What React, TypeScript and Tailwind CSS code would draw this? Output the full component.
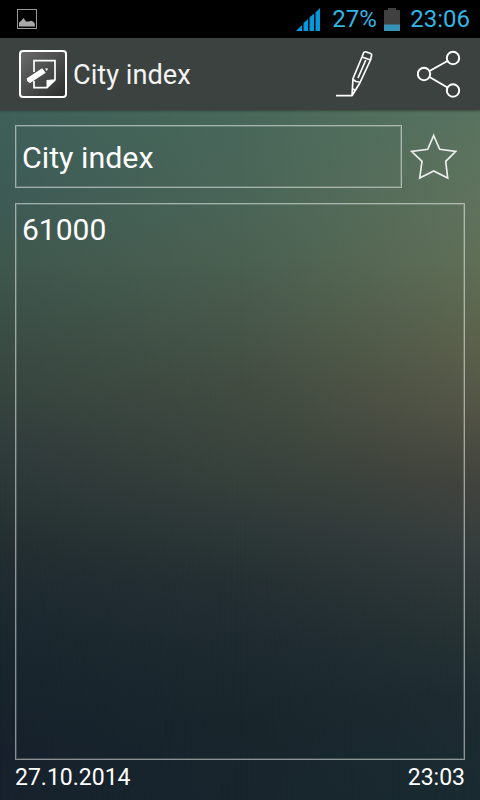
"use client";
import { useState } from "react";

type Note = {
  title: string;
  text: string;
  date: string;
  time: string;
};

const note: Note = {
  title: "City index",
  text: "61000",
  date: "27.10.2014",
  time: "23:03",
};

const StatusBar = () => (
  <div className="flex h-[38px] shrink-0 items-center bg-black text-2xl text-[#33b5e5]">
    <svg className="ml-[17px]" width="20" height="20" viewBox="0 0 20 20">
      <rect x="0.5" y="0.5" width="19" height="19" fill="none" stroke="#999" />
      <path
        d="M2 17.500v-4l2.500-2L6.500 9l2.500 3.500h3l2-.8 2 .8 1.800 2v3z"
        fill="#a9a9a9"
      />
    </svg>
    <svg className="ml-auto" width="25" height="23" viewBox="0 0 25 23">
      <g fill="#0099dd">
        <path d="M0 23L6 17v6z" />
        <path d="M7.500 23v-8l4.500-4V23z" />
        <path d="M13.500 23V9.500l4.500-4V23z" />
        <path d="M19.500 23V4.500l4.500-4.500v23z" />
      </g>
    </svg>
    <span className="ml-[11px] w-[45px] whitespace-nowrap">27%</span>
    <svg className="ml-[7px]" width="16" height="23" viewBox="0 0 16 23">
      <path d="M0 2h4V0h8v2h4v21H0z" fill="#404040" />
      <path d="M0 16.500h16V23H0z" fill="#3592b8" />
    </svg>
    <span className="ml-[10px] mr-[10px]">23:06</span>
  </div>
);

const AppIcon = () => (
  <svg width="48" height="48" viewBox="0 0 48 48">
    <defs>
      <linearGradient id="iconBg" x1="0" y1="0" x2="1" y2="1">
        <stop offset="0" stopColor="#6b6e6d" />
        <stop offset="1" stopColor="#292b2a" />
      </linearGradient>
    </defs>
    <rect
      x="1"
      y="1"
      width="46"
      height="46"
      rx="3"
      fill="url(#iconBg)"
      stroke="#fff"
      strokeWidth="2"
    />
    <path
      d="M15 22V10.700h21V30l-8 7.700H15V31"
      fill="none"
      stroke="#fff"
      strokeWidth="1.7"
    />
    <path d="M27.500 38v-8l9-.7z" fill="#fff" />
    <path
      d="M8.300 28.800l14.700-9.800 2.800 3.500-14.800 9.800q-2.500-.5-2.700-3.500z"
      fill="#fff"
      stroke="#fff"
      strokeWidth="1.2"
    />
    <path d="M26 18.500h3.200l-1.500 2.500z" fill="#fff" />
  </svg>
);

const EditIcon = () => (
  <svg
    width="40"
    height="48"
    viewBox="0 0 40 48"
    fill="none"
    stroke="#fff"
    strokeWidth="1.7"
    strokeLinejoin="round"
  >
    <path d="M1 45.700h16l1-17.200L27 7l1.600-4.200q.6-1.300 2-1l5 1.700q1.400.6 1 2L35.500 10 24.800 33 17 45.700" />
    <path d="M27 7l8.500 3M30.800 10L23 28M18 29.500l3 2 3.500 .5M17.700 39l3 1.500" />
  </svg>
);

const ShareIcon = () => (
  <svg
    width="44"
    height="48"
    viewBox="0 0 44 48"
    fill="none"
    stroke="#fff"
    strokeWidth="2"
  >
    <circle cx="7" cy="24" r="6.200" />
    <circle cx="36" cy="8" r="6.200" />
    <circle cx="36" cy="40.500" r="6.200" />
    <path d="M12.500 21l18-10M12.500 27l18 10.500" />
  </svg>
);

const App = () => {
  const [title, setTitle] = useState(note.title);
  const [text, setText] = useState(note.text);
  const [favorite, setFavorite] = useState(false);

  return (
    <div className="relative isolate flex h-[800px] w-[480px] flex-col overflow-hidden font-[Roboto,sans-serif] text-white">
      {/* background: left, center and right color columns blended together */}
      <div className="absolute inset-0 -z-10 bg-[linear-gradient(#3f6059_110px,#3d5b56_190px,#3f584e_260px,#3b4f46_323px,#37463f_390px,#323e3d_435px,#2a3536_500px,#232e31_550px,#1e2a31_600px,#19262d_658px,#17212c_747px,#17222d_800px)]" />
      <div className="absolute inset-0 -z-10 bg-[linear-gradient(#48685a_110px,#4a6557_200px,#4a6051_260px,#47574a_320px,#424d42_380px,#3c473e_430px,#36413c_480px,#2d3838_530px,#253033_580px,#1e2a30_645px,#18262c_725px,#18252d_800px)] [mask-image:linear-gradient(to_right,transparent,black_50%)]" />
      <div className="absolute inset-0 -z-10 bg-[linear-gradient(#587360_110px,#5f735d_190px,#606f57_260px,#5b614b_345px,#535446_412px,#4b4c41_445px,#42443d_480px,#3a403e_525px,#313a3b_570px,#263233_636px,#1e2c32_700px,#192b31_800px)] [mask-image:linear-gradient(to_right,transparent_50%,black)]" />

      <StatusBar />

      <header className="flex h-[72px] shrink-0 items-center bg-[#3b423f] pl-[19px] pr-[19px] shadow-[0_1px_2px_rgba(0,0,0,0.35)]">
        <AppIcon />
        <h1 className="ml-[6px] pt-[2px] text-[27.2px] text-[#f3f3f3]">
          {title}
        </h1>
        <button className="ml-auto">
          <EditIcon />
        </button>
        <button className="ml-[42px]">
          <ShareIcon />
        </button>
      </header>

      <main className="flex flex-1 flex-col px-[15px] pt-[15px]">
        <div className="flex items-center">
          <input
            className="h-[63px] w-[387px] border border-white/50 px-[6px] pt-[2px] text-[30.400px] shadow-[inset_0_0_0_1px_rgba(255,255,255,0.18)] outline-none"
            value={title}
            onChange={(e) => setTitle(e.target.value)}
          />
          <button className="ml-2" onClick={() => setFavorite(!favorite)}>
            <svg width="48" height="47" viewBox="0 0 48 47">
              <path
                d="M23.700 2.500l6 13.800 16 2-10 10 2 16.700-14-7-14 7 2.300-16.700-10.500-10 16.200-2z"
                fill={favorite ? "#fff" : "none"}
                stroke="#ededed"
                strokeWidth="1.7"
              />
            </svg>
          </button>
        </div>
        <textarea
          className="mt-[15px] h-[557px] w-full resize-none border border-white/50 px-[6px] pt-[8px] text-[30px] leading-[36px] shadow-[inset_0_0_0_1px_rgba(255,255,255,0.18)] outline-none"
          value={text}
          onChange={(e) => setText(e.target.value)}
        />
        <div className="flex justify-between text-[23px] leading-[35px]">
          <span>{note.date}</span>
          <span>{note.time}</span>
        </div>
      </main>
    </div>
  );
};

export default App;
